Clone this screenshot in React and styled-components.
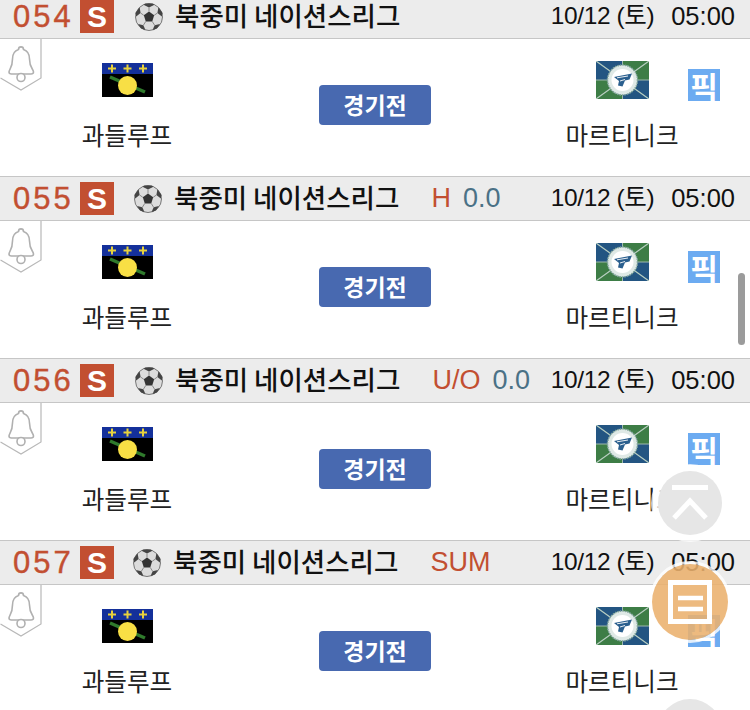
import React from 'react';
import styled, { createGlobalStyle } from 'styled-components';

const colors = {
  head: '#ececec',
  line: '#c6c6c6',
  red: '#c24f31',
  slate: '#4a7186',
  button: '#4869b0',
  pick: '#6cabf1',
  text: '#111111',
};

const GlobalStyle = createGlobalStyle`
  html, body { margin: 0; padding: 0; background: #fff; }
  * { box-sizing: border-box; }
  body { font-family: "Liberation Sans", "Noto Sans CJK KR", sans-serif; }
`;

const Screen = styled.div`
  position: relative;
  width: 750px;
  height: 710px;
  overflow: hidden;
`;

const List = styled.div`
  margin-top: -6px;
`;

const Header = styled.div`
  display: flex;
  align-items: center;
  height: 45px;
  padding: 0 15px 0 13px;
  background: ${colors.head};
  border-top: 1px solid ${colors.line};
  border-bottom: 1px solid ${colors.line};
`;

const Num = styled.span`
  width: 67px;
  font-size: 31px;
  line-height: 30px;
  letter-spacing: 3px;
  color: ${colors.red};
  -webkit-text-stroke: 0.4px ${colors.red};
`;

const SBox = styled.span`
  display: flex;
  align-items: center;
  justify-content: center;
  width: 34px;
  height: 33px;
  background: ${colors.red};
  color: #fff;
  font-size: 30px;
  line-height: 30px;
  font-weight: bold;
`;

const League = styled.div`
  display: flex;
  align-items: center;
  margin-left: ${props => props.$shift}px;
`;

const LeagueName = styled.span`
  margin: 0 0 4px 12px;
  font-family: "Noto Sans CJK KR", sans-serif;
  font-size: 26.5px;
  line-height: 30px;
  font-weight: 500;
  white-space: nowrap;
  color: ${colors.text};
`;

const Handicap = styled.div`
  display: flex;
  gap: 12px;
  margin-left: 32px;
  font-size: 27px;
  white-space: nowrap;
`;

const HandiLabel = styled.span`
  color: ${colors.red};
`;

const HandiValue = styled.span`
  color: ${colors.slate};
`;

const DateTime = styled.div`
  display: flex;
  gap: 17px;
  margin: 0 0 1px auto;
  line-height: 30px;
  white-space: nowrap;
  color: ${colors.text};
`;

const DateText = styled.span`
  font-size: 24.5px;
  letter-spacing: -0.4px;
`;

const TimeText = styled.span`
  font-size: 25.5px;
`;

const Body = styled.div`
  position: relative;
  display: grid;
  grid-template-columns: 254px 1fr 256px;
  height: 137px;
`;

const Team = styled.div`
  display: flex;
  flex-direction: column;
  align-items: center;
`;

const FlagBox = styled.div`
  display: flex;
  align-items: center;
  justify-content: center;
  height: 40px;
  margin-top: 21px;
`;

const TeamName = styled.div`
  margin-top: 18px;
  font-family: "Noto Sans CJK KR", sans-serif;
  font-size: 24.6px;
  line-height: 32px;
  color: #222;
`;

const Center = styled.div`
  display: flex;
  justify-content: center;
  padding: 46px 0 0 2px;
`;

const PlayButton = styled.button`
  width: 112px;
  height: 40px;
  padding: 0 0 2px;
  border: 0;
  border-radius: 4px;
  background: ${colors.button};
  color: #fff;
  font-family: "Noto Sans CJK KR", sans-serif;
  font-size: 23px;
  font-weight: 700;
`;

const BellTag = styled.svg`
  position: absolute;
  top: 0;
  left: 0;
`;

const Pick = styled.span`
  position: absolute;
  top: 30px;
  left: 688px;
  display: flex;
  align-items: center;
  justify-content: center;
  width: 32px;
  height: 32px;
  background: ${colors.pick};
  color: #fff;
  font-family: "Noto Sans CJK KR", sans-serif;
  font-size: 30px;
  font-weight: 700;
  line-height: 32px;
`;

const ScrollBar = styled.div`
  position: absolute;
  top: 273px;
  left: 738px;
  width: 7px;
  height: 72px;
  border-radius: 4px;
  background: #9b9b9b;
`;

const Fab = styled.div`
  position: absolute;
  left: ${props => props.$cx - props.$r}px;
  top: ${props => props.$cy - props.$r}px;
  display: flex;
  align-items: center;
  justify-content: center;
  width: ${props => props.$r * 2}px;
  height: ${props => props.$r * 2}px;
  border-radius: 50%;
  background: ${props => props.$bg};
  box-shadow: 0 0 0 ${props => props.$ring}px rgba(255, 255, 255, ${props => props.$ringAlpha});
`;

const Ball = () => (
  <svg width="28" height="28" viewBox="0 0 28 28">
    <circle cx="14" cy="14" r="13.5" fill="#dcdcdc" stroke="#777" strokeWidth="1" />
    <polygon points="14,8.5 19.2,12.3 17.2,18.4 10.8,18.4 8.8,12.3" fill="#333" />
    <path d="M8.5 1.8 L14 4.5 L19.5 1.8 L17.5 0.6 H10.5Z" fill="#444" />
    <path d="M23.4 4.2 L22.4 10 L26.8 13.4 L27.6 10 Z" fill="#444" />
    <path d="M4.6 4.2 L5.6 10 L1.2 13.4 L0.4 10 Z" fill="#444" />
    <path d="M3 21 L8.4 22.2 L10.4 27 L6 25.4 Z" fill="#444" />
    <path d="M25 21 L19.6 22.2 L17.6 27 L22 25.4 Z" fill="#444" />
    <path d="M14 8.5 V4.5 M19.2 12.3 L22.4 10 M8.8 12.3 L5.6 10 M10.8 18.4 L8.4 22.2 M17.2 18.4 L19.6 22.2" stroke="#888" strokeWidth="1" />
  </svg>
);

const Cross = ({ x }) => (
  <path d={`M${x - 4} 5.5 H${x + 4} M${x} 1.5 V9.5`} stroke="#e8d23c" strokeWidth="2" />
);

const GuadeloupeFlag = () => (
  <svg width="51" height="34" viewBox="0 0 51 34">
    <rect width="51" height="34" fill="#000" />
    <rect width="51" height="11" fill="#14309a" />
    <Cross x={10} />
    <Cross x={25.5} />
    <Cross x={41} />
    <path d="M8 14 L43 29" stroke="#2f7a2c" strokeWidth="3.5" />
    <circle cx="25.5" cy="22.5" r="9.5" fill="#f8df45" />
  </svg>
);

const MartiniqueFlag = () => (
  <svg width="53" height="38" viewBox="0 0 53 38">
    <rect width="26.5" height="19" fill="#235582" />
    <rect x="26.5" width="26.5" height="19" fill="#3d7d46" />
    <rect y="19" width="26.5" height="19" fill="#3d7d46" />
    <rect x="26.5" y="19" width="26.5" height="19" fill="#235582" />
    <path d="M0 0 L53 38 M53 0 L0 38" stroke="#b9cfc2" strokeWidth="1.2" />
    <path d="M26.5 0 V38 M0 19 H53" stroke="#9fb9ad" strokeWidth="1" />
    <circle cx="26.5" cy="19" r="15" fill="#dfe9e6" stroke="#7fa39a" strokeWidth="1.5" strokeDasharray="1.5 1" />
    <circle cx="26.5" cy="19" r="11" fill="#fff" />
    <path d="M18 16 L36 12.5 L33.5 18.5 L29 19.5 L26.5 25.5 L22 24.5 L23 20 Z" fill="#2a5f8e" />
    <path d="M21 16.8 L32 15 M24 20 L29 18.5" stroke="#fff" strokeWidth="0.9" />
  </svg>
);

const Bell = () => (
  <BellTag width="42" height="53" viewBox="0 0 42 53">
    <path d="M41 0 V39 L21 51 L0.5 39" fill="#fff" stroke="#b8b8b8" strokeWidth="1.2" />
    <path
      d="M9 33 C9 30 12.5 29 12.5 20 C12.5 14.5 15.5 11.5 18.5 10.5 C18.5 7 23.5 7 23.5 10.5 C26.5 11.5 29.5 14.5 29.5 20 C29.5 29 33.5 30 33.5 33 C33.5 34.5 32.5 35 31 35 H11.5 C10 35 9 34.5 9 33 Z"
      fill="none"
      stroke="#b0b0b0"
      strokeWidth="1.6"
    />
    <circle cx="21" cy="38.5" r="4" fill="#fff" stroke="#b0b0b0" strokeWidth="1.6" />
  </BellTag>
);

const rows = [
  { num: '054', shift: 21 },
  { num: '055', shift: 20, label: 'H', value: '0.0' },
  { num: '056', shift: 21, label: 'U/O', value: '0.0' },
  { num: '057', shift: 19, label: 'SUM' },
];

const Match = ({ row }) => (
  <section>
    <Header>
      <Num>{row.num}</Num>
      <SBox>S</SBox>
      <League $shift={row.shift}>
        <Ball />
        <LeagueName>북중미 네이션스리그</LeagueName>
      </League>
      {row.label && (
        <Handicap>
          <HandiLabel>{row.label}</HandiLabel>
          {row.value && <HandiValue>{row.value}</HandiValue>}
        </Handicap>
      )}
      <DateTime>
        <DateText>10/12 (토)</DateText>
        <TimeText>05:00</TimeText>
      </DateTime>
    </Header>
    <Body>
      <Bell />
      <Team>
        <FlagBox><GuadeloupeFlag /></FlagBox>
        <TeamName>과들루프</TeamName>
      </Team>
      <Center>
        <PlayButton>경기전</PlayButton>
      </Center>
      <Team>
        <FlagBox><MartiniqueFlag /></FlagBox>
        <TeamName>마르티니크</TeamName>
      </Team>
      <Pick>픽</Pick>
    </Body>
  </section>
);

export default function App() {
  return (
    <Screen>
      <GlobalStyle />
      <List>
        {rows.map(row => <Match key={row.num} row={row} />)}
      </List>
      <ScrollBar />
      <Fab $cx={690} $cy={503} $r={32} $bg="#e6e6e6" $ring={7} $ringAlpha={0.75}>
        <svg width="38" height="36" viewBox="0 0 38 36">
          <path d="M1 2.5 H37" stroke="#fff" strokeWidth="5" fill="none" />
          <path d="M3 33 L19 16 L35 33" stroke="#fff" strokeWidth="5" fill="none" />
        </svg>
      </Fab>
      <Fab $cx={690} $cy={602} $r={38} $bg="rgba(234, 176, 109, 0.88)" $ring={3} $ringAlpha={0.8}>
        <svg width="44" height="44" viewBox="0 0 44 44">
          <rect x="2.5" y="2.5" width="39" height="39" stroke="#fff" strokeWidth="5" fill="none" />
          <path d="M10 18 H35 M10 29 H35" stroke="#fff" strokeWidth="4.5" />
        </svg>
      </Fab>
      <Fab $cx={690} $cy={731} $r={32} $bg="#e6e6e6" $ring={3} $ringAlpha={0.75} />
    </Screen>
  );
}
